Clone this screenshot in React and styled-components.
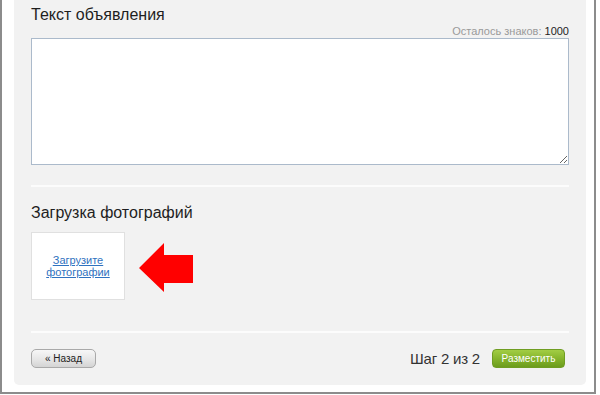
import React from "react";
import styled, { createGlobalStyle } from "styled-components";

const GlobalStyle = createGlobalStyle`
  html, body {
    margin: 0;
    padding: 0;
    background: #ffffff;
  }
  body {
    font-family: "Liberation Sans", Arial, sans-serif;
  }
`;

const Frame = styled.div`
  box-sizing: border-box;
  width: 596px;
  border-left: 2px solid #8c8c8c;
  border-right: 2px solid #8c8c8c;
  border-bottom: 2px solid #8c8c8c;
  padding: 0 8px 7px 12px;
  background: #fff;
`;

const Panel = styled.div`
  background: #f2f2f2;
  border-radius: 0 0 5px 5px;
  padding: 5px 17px 17px 17px;
  display: flex;
  flex-direction: column;
`;

const Heading = styled.h2`
  margin: ${({ $top }) => $top || 0}px 0 0 0;
  font-size: 16px;
  line-height: 20px;
  font-weight: normal;
  color: #1e1e1e;
`;

const Counter = styled.div`
  text-align: right;
  font-size: 11px;
  line-height: 13px;
  color: #9a9a9a;

  b {
    font-weight: normal;
    color: #222;
  }
`;

const TextArea = styled.textarea`
  box-sizing: border-box;
  display: block;
  width: 100%;
  height: 127px;
  margin: 0;
  border: 1px solid #abbacb;
  background: #fff;
  font-family: "Liberation Sans", Arial, sans-serif;
  font-size: 12px;
  outline: none;
`;

const Divider = styled.div`
  height: 2px;
  background: #fcfcfc;
  margin-top: ${({ $top }) => $top}px;
`;

const UploadRow = styled.div`
  display: flex;
  align-items: center;
  gap: 14px;
  margin-top: 9px;
`;

const UploadBox = styled.div`
  box-sizing: border-box;
  width: 94px;
  height: 68px;
  background: #fff;
  border: 1px solid #e0e0e0;
  display: flex;
  align-items: center;
  justify-content: center;
  text-align: center;
`;

const UploadLink = styled.a`
  font-size: 11px;
  line-height: 12px;
  color: #2f72c0;
  text-decoration: underline;
  cursor: pointer;
`;

const Arrow = styled.svg`
  display: block;
  margin-top: 2px;
`;

const Footer = styled.div`
  display: flex;
  align-items: center;
  justify-content: space-between;
  margin-top: 16px;
`;

const BackButton = styled.button`
  box-sizing: border-box;
  width: 65px;
  height: 19px;
  padding: 0;
  border: 1px solid #a9a9a9;
  border-radius: 5px;
  background: linear-gradient(#f7f7f7, #e6e6e6 55%, #d4d4d4);
  font-family: "Liberation Sans", Arial, sans-serif;
  font-size: 10px;
  color: #222;
`;

const StepGroup = styled.div`
  display: flex;
  align-items: center;
  gap: 12px;
  margin-right: 4px;
`;

const StepText = styled.span`
  font-size: 15px;
  color: #333;
  letter-spacing: -0.2px;
`;

const SubmitButton = styled.button`
  box-sizing: border-box;
  width: 73px;
  height: 19px;
  padding: 0;
  border: 1px solid #6f9d22;
  border-radius: 4px;
  background: linear-gradient(#a2cd44, #86b52c 50%, #6c9c1d);
  font-family: "Liberation Sans", Arial, sans-serif;
  font-size: 10px;
  color: #fff;
`;

export default function App() {
  return (
    <>
      <GlobalStyle />
      <Frame>
        <Panel>
          <Heading>Текст объявления</Heading>
          <Counter>
            Осталось знаков: <b>1000</b>
          </Counter>
          <TextArea />
          <Divider $top={20} />
          <Heading $top={16}>Загрузка фотографий</Heading>
          <UploadRow>
            <UploadBox>
              <UploadLink>
                Загрузите
                <br />
                фотографии
              </UploadLink>
            </UploadBox>
            <Arrow width="54" height="49" viewBox="0 0 54 49">
              <polygon
                points="0,25 25,0 25,12 54,12 54,40 25,40 25,49"
                fill="#ff0000"
              />
            </Arrow>
          </UploadRow>
          <Divider $top={31} />
          <Footer>
            <BackButton>« Назад</BackButton>
            <StepGroup>
              <StepText>Шаг 2 из 2</StepText>
              <SubmitButton>Разместить</SubmitButton>
            </StepGroup>
          </Footer>
        </Panel>
      </Frame>
    </>
  );
}
